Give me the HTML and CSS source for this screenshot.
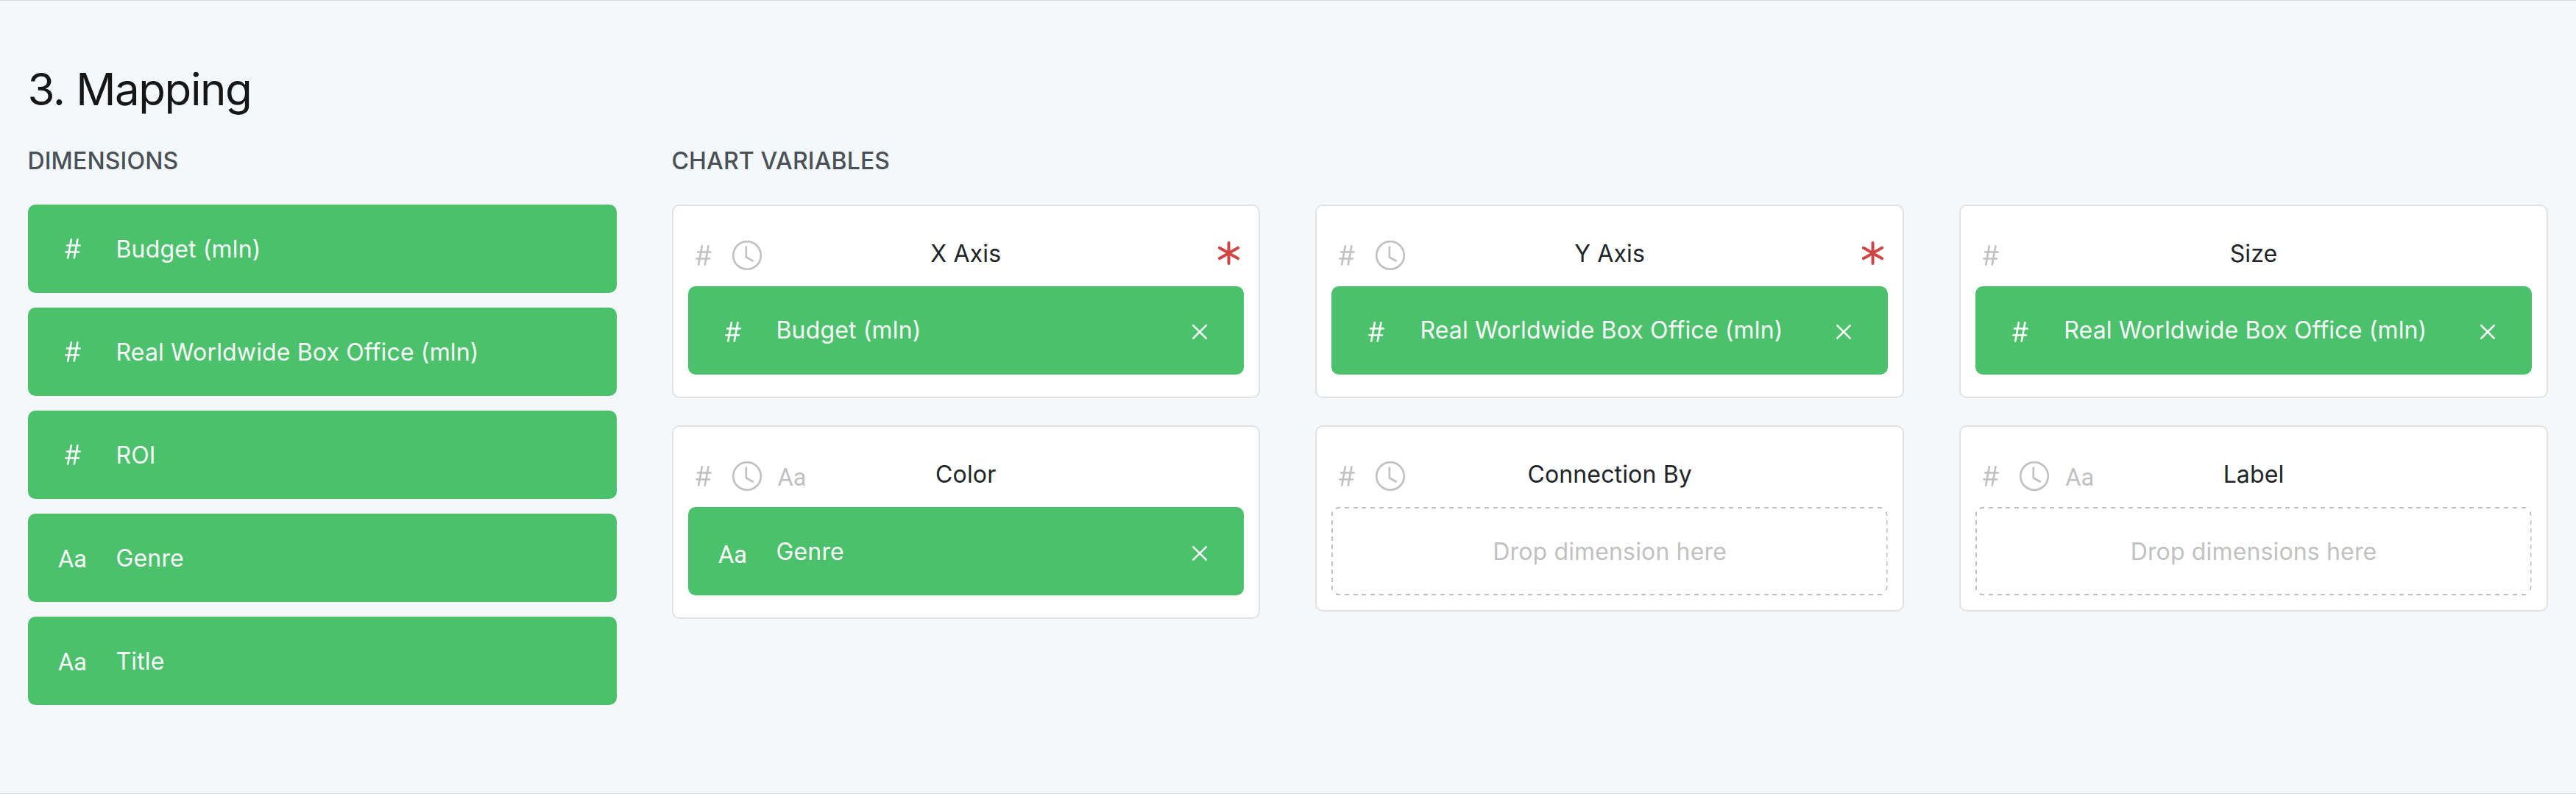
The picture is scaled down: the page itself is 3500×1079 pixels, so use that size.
FILE: index.html
```html
<!DOCTYPE html>
<html lang="en">
<head>
<meta charset="utf-8">
<title>Mapping</title>
<link rel="stylesheet" href="styles.css">
</head>
<body>
<svg class="defs" aria-hidden="true">
  <symbol id="hash" viewBox="0 0 22 28"><path d="M8.8 1.4 4.2 26.6M17.4 1.4 12.8 26.6M3 9.5h17.6M1.4 18.5h17.6"/></symbol>
  <symbol id="clock" viewBox="0 0 40 40"><circle cx="20" cy="20" r="18.8"/><path d="M18.8 8.5v14l9 5"/></symbol>
  <symbol id="close" viewBox="0 0 20 20"><path d="M1.3 1.3l17.4 17.4M18.7 1.3L1.3 18.7"/></symbol>
  <symbol id="star" viewBox="0 0 29 32"><path d="M14.5 2v28M1.9 8.8l25.2 14.4M27.1 8.8L1.9 23.2"/></symbol>
  <symbol id="dashes" viewBox="0 0 756 120">
    <path stroke-dasharray="6 5.88" d="M6 2Q8 1 10 1H746Q748 1 750 2M6 118Q8 119 10 119H746Q748 119 750 118"/>
    <path stroke-dasharray="6 5.18" d="M1.6 6.5Q1 8 1 10V110Q1 112 1.6 113.5M754.4 6.5Q755 8 755 10V110Q755 112 754.4 113.5"/>
  </symbol>
</svg>
<section class="mapping">
  <h1 class="title">3. Mapping</h1>
  <div class="columns">
    <div class="dimensions">
      <h2 class="heading">DIMENSIONS</h2>
      <ul class="pills">
        <li class="pill"><span class="type"><svg class="hash"><use href="#hash"/></svg></span><span class="name">Budget (mln)</span></li>
        <li class="pill"><span class="type"><svg class="hash"><use href="#hash"/></svg></span><span class="name">Real Worldwide Box Office (mln)</span></li>
        <li class="pill"><span class="type"><svg class="hash"><use href="#hash"/></svg></span><span class="name">ROI</span></li>
        <li class="pill"><span class="type aa">Aa</span><span class="name">Genre</span></li>
        <li class="pill"><span class="type aa">Aa</span><span class="name">Title</span></li>
      </ul>
    </div>
    <div class="variables">
      <h2 class="heading">CHART VARIABLES</h2>
      <div class="cards">
        <article class="card">
          <header class="card-head"><span class="types"><svg class="hash"><use href="#hash"/></svg><svg class="clock"><use href="#clock"/></svg></span><span class="label">X Axis</span><span class="required"><svg class="star"><use href="#star"/></svg></span></header>
          <div class="pill assigned"><span class="type"><svg class="hash"><use href="#hash"/></svg></span><span class="name">Budget (mln)</span><svg class="close"><use href="#close"/></svg></div>
        </article>
        <article class="card">
          <header class="card-head"><span class="types"><svg class="hash"><use href="#hash"/></svg><svg class="clock"><use href="#clock"/></svg></span><span class="label">Y Axis</span><span class="required"><svg class="star"><use href="#star"/></svg></span></header>
          <div class="pill assigned"><span class="type"><svg class="hash"><use href="#hash"/></svg></span><span class="name">Real Worldwide Box Office (mln)</span><svg class="close"><use href="#close"/></svg></div>
        </article>
        <article class="card">
          <header class="card-head"><span class="types"><svg class="hash"><use href="#hash"/></svg></span><span class="label">Size</span><span class="required"></span></header>
          <div class="pill assigned"><span class="type"><svg class="hash"><use href="#hash"/></svg></span><span class="name">Real Worldwide Box Office (mln)</span><svg class="close"><use href="#close"/></svg></div>
        </article>
        <article class="card">
          <header class="card-head"><span class="types"><svg class="hash"><use href="#hash"/></svg><svg class="clock"><use href="#clock"/></svg><span class="aa">Aa</span></span><span class="label">Color</span><span class="required"></span></header>
          <div class="pill assigned text"><span class="type aa">Aa</span><span class="name">Genre</span><svg class="close"><use href="#close"/></svg></div>
        </article>
        <article class="card">
          <header class="card-head"><span class="types"><svg class="hash"><use href="#hash"/></svg><svg class="clock"><use href="#clock"/></svg></span><span class="label">Connection By</span><span class="required"></span></header>
          <div class="drop"><svg class="dashes"><use href="#dashes"/></svg>Drop dimension here</div>
        </article>
        <article class="card">
          <header class="card-head"><span class="types"><svg class="hash"><use href="#hash"/></svg><svg class="clock"><use href="#clock"/></svg><span class="aa">Aa</span></span><span class="label">Label</span><span class="required"></span></header>
          <div class="drop"><svg class="dashes"><use href="#dashes"/></svg>Drop dimensions here</div>
        </article>
      </div>
    </div>
  </div>
</section>
</body>
</html>
```
FILE: styles.css
```css
* { box-sizing: border-box; }
body {
  margin: 0;
  background: #f5f8fb;
  color: #212529;
  font: 400 32px/48px Inter, sans-serif;
  letter-spacing: 0.15px;
}
.defs { display: none; }
.mapping {
  height: 1079px;
  padding: 84px 37.5px 0;
  border-top: 1px solid #d6d6d6;
  border-bottom: 1px solid #d4d8dc;
}
.title {
  margin: 0;
  color: #161616;
  font-size: 60px;
  font-weight: 400;
  line-height: 72px;
  letter-spacing: -1.4px;
}
.columns { display: grid; grid-template-columns: 800px 1fr; gap: 75px; padding-top: 38px; }
.heading {
  margin: 0 0 35px;
  color: #495057;
  font-size: 32px;
  font-weight: 500;
  line-height: 48px;
}
.pills { display: flex; flex-direction: column; gap: 20px; margin: 0; padding: 0; list-style: none; }
.pill {
  display: flex;
  align-items: center;
  height: 120px;
  border-radius: 10px;
  background: #4cc16c;
  color: #f8f9fa;
}
.type { display: flex; justify-content: center; width: 120px; padding-left: 2px; }
.name { flex: 1; padding-top: 2px; }
.aa { padding-top: 4px; font-family: Roboto, sans-serif; font-size: 32.5px; letter-spacing: 0; }
svg { fill: none; stroke: currentColor; stroke-linecap: round; stroke-linejoin: round; }
.hash { width: 22px; height: 28px; stroke-width: 2.6; }
.clock { width: 40px; height: 40px; stroke-width: 2.6; }
.close { width: 20px; height: 20px; margin: 4px 50px 0 0; stroke-width: 2.6; }
.star { width: 29px; height: 32px; stroke-width: 4; }
.cards { display: grid; grid-template-columns: repeat(3, 799.5px); grid-auto-rows: 263px; gap: 37px 75.4px; align-items: start; }
.card {
  padding: 35px 20px 20px;
  border: 2px solid #e2e2e2;
  border-radius: 10px;
  background: #fff;
}
.card-head { display: grid; grid-template-columns: 1fr auto 1fr; height: 74px; padding: 6px 6px 0; }
.label { line-height: 48px; }
.types { display: flex; align-items: center; gap: 28px; height: 52px; padding-left: 4px; color: #c1c1c1; }
.types .aa { margin-left: -6px; }
.required { display: flex; align-items: center; justify-content: flex-end; height: 46px; color: #d04545; }
.assigned { margin-bottom: 10px; color: #fff; }
.assigned .name { padding-top: 0; color: #f8f9fa; }
.assigned.text .name { padding-top: 2px; }
.assigned.text .close { margin-top: 6px; }
.assigned .hash { margin-top: 3px; }
.assigned .aa { padding-top: 9px; }
.drop {
  position: relative;
  display: flex;
  align-items: center;
  justify-content: center;
  height: 120px;
  padding-top: 2px;
  color: #c1c1c1;
}
.dashes {
  position: absolute;
  inset: 0;
  width: 100%;
  height: 100%;
  stroke-width: 2;
  stroke-linecap: butt;
  shape-rendering: crispEdges;
}
```
